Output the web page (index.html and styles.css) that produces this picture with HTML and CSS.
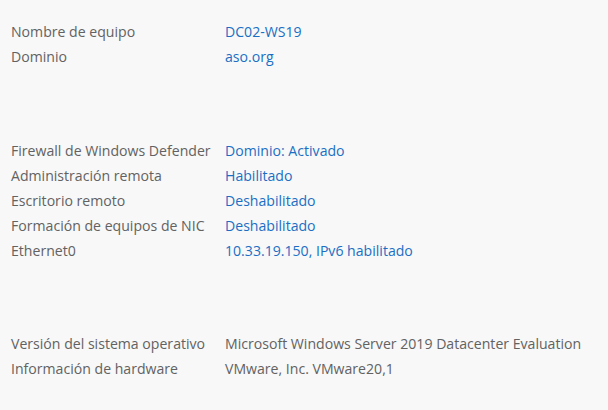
FILE: index.html
```html
<!DOCTYPE html>
<html lang="es">
<head>
<meta charset="utf-8">
<link rel="stylesheet" href="styles.css">
</head>
<body>
<div class="panel">
  <div class="group group-identity">
    <span class="label">Nombre de equipo</span><span class="value link">DC02-WS19</span>
    <span class="label">Dominio</span><span class="value link">aso.org</span>
  </div>
  <div class="group group-network">
    <span class="label">Firewall de Windows Defender</span><span class="value link">Dominio: Activado</span>
    <span class="label">Administración remota</span><span class="value link">Habilitado</span>
    <span class="label">Escritorio remoto</span><span class="value link">Deshabilitado</span>
    <span class="label">Formación de equipos de NIC</span><span class="value link">Deshabilitado</span>
    <span class="label">Ethernet0</span><span class="value link">10.33.19.150, IPv6 habilitado</span>
  </div>
  <div class="group group-system">
    <span class="label">Versión del sistema operativo</span><span class="value">Microsoft Windows Server 2019 Datacenter Evaluation</span>
    <span class="label">Información de hardware</span><span class="value">VMware, Inc. VMware20,1</span>
  </div>
</div>
</body>
</html>
```
FILE: styles.css
```css
html, body {
  margin: 0;
  padding: 0;
  background: #f8f8f8;
  width: 608px;
  height: 410px;
  overflow: hidden;
}
.panel {
  padding: 19px 0 0 11px;
  display: flex;
  flex-direction: column;
  gap: 68px;
  font-family: "Open Sans", "Noto Sans", sans-serif;
  font-size: 14.1px;
}
.group-identity {
  margin-bottom: 1px;
}
.group {
  display: grid;
  grid-template-columns: 214px auto;
  grid-auto-rows: 25px;
  align-items: center;
}
.label {
  color: #626262;
  white-space: nowrap;
}
.value {
  color: #626262;
  white-space: nowrap;
}
.link {
  color: #1a6fc4;
}
```
